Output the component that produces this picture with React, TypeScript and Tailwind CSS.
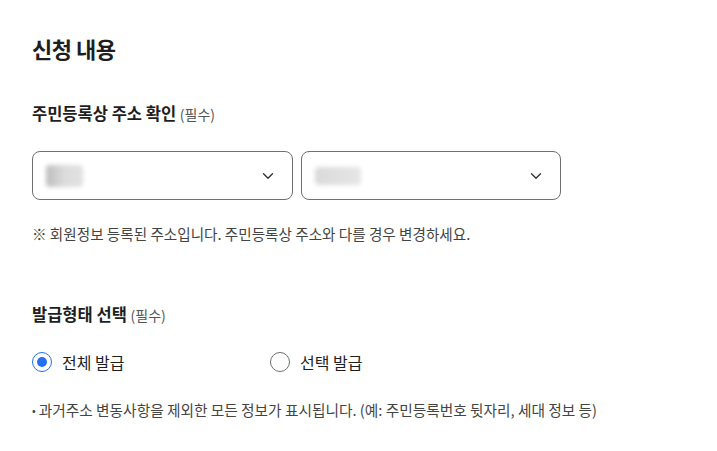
import React, { useState } from 'react';
import { ChevronDown } from 'lucide-react';

const font = "font-['Noto_Sans_CJK_KR','Noto_Sans',sans-serif]";

function AddressSelect({ blob }: { blob: string }) {
  return (
    <button className="flex-1 h-[49px] flex items-center justify-between pl-[13px] pr-[15px] border border-[#6f6f6f] rounded-[8px] bg-white">
      <span className="flex items-center h-[26px]">
        <span className={blob} />
      </span>
      <ChevronDown size={18} strokeWidth={1.8} className="text-[#333]" />
    </button>
  );
}

export default function App() {
  const [type, setType] = useState<'all' | 'select'>('all');

  return (
    <div className={`min-h-screen bg-white text-[#1e1e1e] ${font}`}>
      <div className="pl-[32px] pt-[32px] w-[529px] box-content">
        <h1 className="text-[22px] font-bold leading-[32px] tracking-[-0.5px]">신청 내용</h1>

        {/* 주소 확인 */}
        <div className="mt-[37px]">
          <h2 className="text-[16.5px] font-bold leading-[24px]">
            주민등록상 주소 확인 <span className="text-[14px] font-normal text-[#555]">(필수)</span>
          </h2>
          <div className="flex gap-[8px] mt-[25px]">
            <AddressSelect blob="block w-[37px] h-[22px] bg-gradient-to-r from-[#bdbdbd] via-[#dcdcdc] to-[#e2e2e2] blur-[2px] rounded-sm" />
            <AddressSelect blob="block w-[46px] h-[18px] bg-gradient-to-r from-[#dadada] to-[#e6e6e6] blur-[2px] rounded-sm" />
          </div>
          <p className="mt-[24px] text-[14.6px] leading-[20px] text-[#444]">
            ※ 회원정보 등록된 주소입니다. 주민등록상 주소와 다를 경우 변경하세요.
          </p>
        </div>

        {/* 발급형태 */}
        <div className="mt-[58px]">
          <h2 className="text-[16.5px] font-bold leading-[24px]">
            발급형태 선택 <span className="text-[14px] font-normal text-[#555]">(필수)</span>
          </h2>
          <div className="flex mt-[23px] h-[24px] items-center">
            <label className="flex items-center gap-[10px] w-[238px] cursor-pointer" onClick={() => setType('all')}>
              <span className={`w-[20px] h-[20px] rounded-full border-[1.5px] flex items-center justify-center ${type === 'all' ? 'border-[#256ef4]' : 'border-[#6f6f6f]'}`}>
                {type === 'all' && <span className="w-[10px] h-[10px] rounded-full bg-[#256ef4]" />}
              </span>
              <span className="text-[16px] leading-[24px]">전체 발급</span>
            </label>
            <label className="flex items-center gap-[10px] cursor-pointer" onClick={() => setType('select')}>
              <span className={`w-[20px] h-[20px] rounded-full border-[1.5px] flex items-center justify-center ${type === 'select' ? 'border-[#256ef4]' : 'border-[#6f6f6f]'}`}>
                {type === 'select' && <span className="w-[10px] h-[10px] rounded-full bg-[#256ef4]" />}
              </span>
              <span className="text-[16px] leading-[24px]">선택 발급</span>
            </label>
          </div>
          <p className="mt-[26px] text-[14.7px] leading-[20px] text-[#444] whitespace-nowrap">
            <span className="text-[11px] mr-[3px] relative top-[-1px]">•</span>과거주소 변동사항을 제외한 모든 정보가 표시됩니다. (예: 주민등록번호 뒷자리, 세대 정보 등)
          </p>
        </div>
      </div>
    </div>
  );
}
